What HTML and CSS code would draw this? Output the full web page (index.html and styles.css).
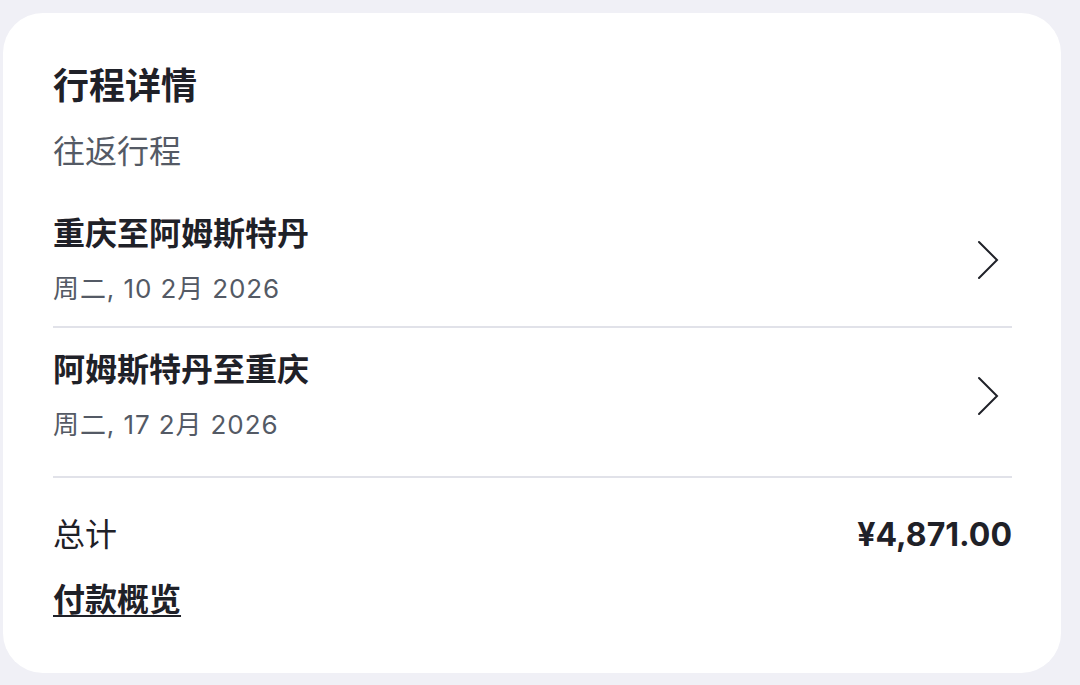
FILE: index.html
```html
<!DOCTYPE html>
<html lang="zh-CN">
<head>
<meta charset="utf-8">
<title>行程详情</title>
<link rel="stylesheet" href="styles.css">
</head>
<body>
<main class="card">
  <h1 class="title">行程详情</h1>
  <p class="subtitle">往返行程</p>
  <ul class="legs">
    <li class="leg">
      <div class="leg-text">
        <div class="leg-route">重庆至阿姆斯特丹</div>
        <div class="leg-date">周二, 10 2月 2026</div>
      </div>
      <svg class="chevron" width="24" height="40" viewBox="0 0 24 40" aria-hidden="true">
        <polyline points="3,2 21,20 3,38" fill="none" stroke="#1f2128" stroke-width="2" stroke-linecap="round" stroke-linejoin="miter"/>
      </svg>
    </li>
    <li class="leg leg-last">
      <div class="leg-text">
        <div class="leg-route">阿姆斯特丹至重庆</div>
        <div class="leg-date">周二, 17 2月 2026</div>
      </div>
      <svg class="chevron" width="24" height="40" viewBox="0 0 24 40" aria-hidden="true">
        <polyline points="3,2 21,20 3,38" fill="none" stroke="#1f2128" stroke-width="2" stroke-linecap="round" stroke-linejoin="miter"/>
      </svg>
    </li>
  </ul>
  <div class="total-row">
    <span class="total-label">总计</span>
    <span class="total-price">¥4,871.00</span>
  </div>
  <a class="overview" href="#">付款概览</a>
</main>
</body>
</html>
```

FILE: styles.css
```css
html, body {
  margin: 0;
  padding: 0;
}
body {
  background: #f0f0f6;
  font-family: Inter, "Noto Sans CJK SC", "Noto Sans", sans-serif;
  color: #1f2128;
  width: 1080px;
  height: 685px;
  overflow: hidden;
  padding-top: 13px;
  padding-left: 3px;
  box-sizing: border-box;
}
.card {
  width: 1058px;
  height: 660px;
  box-sizing: border-box;
  background: #ffffff;
  border-radius: 40px;
  padding: 51px 49px 0 50px;
  display: flex;
  flex-direction: column;
}
.title {
  margin: 0;
  font-size: 36px;
  line-height: 44px;
  font-weight: 700;
  color: #1f2128;
}
.subtitle {
  margin: 24px 0 0;
  font-size: 32px;
  line-height: 40px;
  color: #545a65;
}
.legs {
  list-style: none;
  margin: 20px 0 0;
  padding: 0;
}
.leg {
  display: flex;
  align-items: center;
  justify-content: space-between;
  padding: 22px 0 20px;
  border-bottom: 2px solid #e1e2e9;
}
.leg-last {
  padding-bottom: 34px;
}
.leg-text {
  display: flex;
  flex-direction: column;
  gap: 18px;
}
.leg-route {
  font-size: 32px;
  line-height: 40px;
  font-weight: 700;
  color: #1f2128;
}
.leg-date {
  font-size: 26px;
  line-height: 34px;
  color: #545a65;
  letter-spacing: 0.9px;
}
.chevron {
  display: block;
  margin-right: 12px;
}
.total-row {
  display: flex;
  justify-content: space-between;
  align-items: center;
  margin-top: 37px;
}
.total-label {
  font-size: 32px;
  line-height: 40px;
  color: #1f2128;
}
.total-price {
  font-size: 32px;
  line-height: 40px;
  font-weight: 700;
  color: #1f2128;
}
.overview {
  align-self: flex-start;
  margin-top: 25px;
  font-size: 32px;
  line-height: 40px;
  font-weight: 700;
  color: #1f2128;
  text-decoration: underline;
  text-decoration-thickness: 2px;
  text-underline-offset: 4px;
}
```
